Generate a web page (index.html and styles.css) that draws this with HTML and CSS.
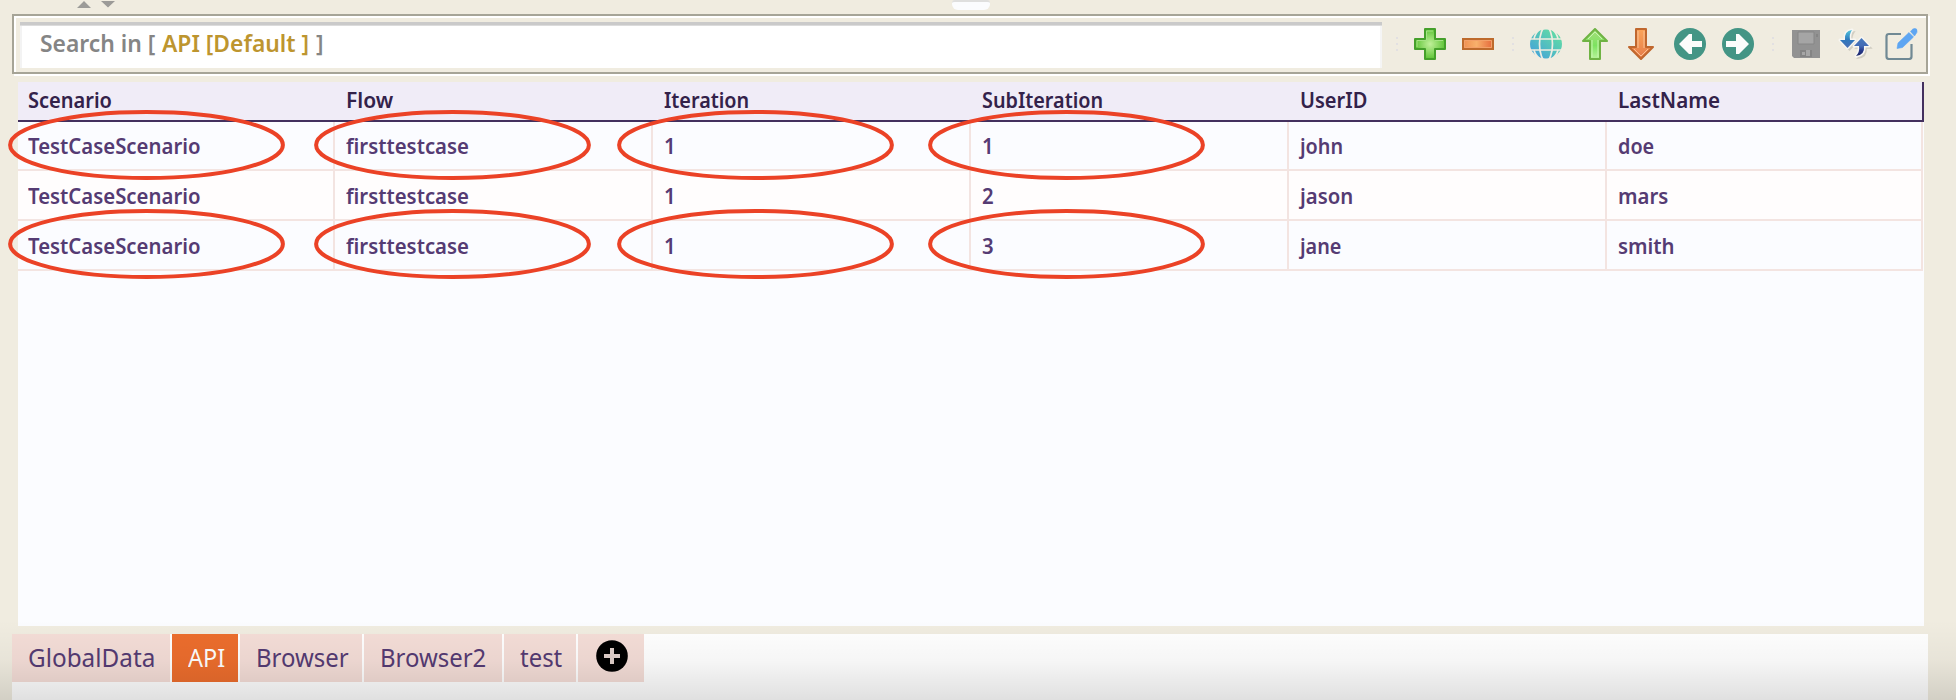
FILE: index.html
```html
<!DOCTYPE html>
<html lang="en">
<head>
<meta charset="utf-8">
<title>Test Data</title>
<link rel="stylesheet" href="styles.css">
</head>
<body>
<div class="app">
  <header class="splitter">
    <svg class="arrows" width="40" height="9" viewBox="0 0 40 9"><path d="M0 8L7 1L14 8zM24 1h14l-7 6.500z" fill="#9c9b98"/></svg>
    <span class="handle"></span>
  </header>
  <div class="toolbar">
    <div class="search"><span class="s1">Search in [</span><span class="s2">API [Default ]</span><span class="s3">]</span></div>
    <svg class="dots d1" width="2" height="14" viewBox="0 0 2 14"><path d="M0 0h2v2H0zM0 6h2v2H0zM0 12h2v2H0z" fill="#e2e0e2"/></svg>
    <svg class="ic plus" width="32" height="32" viewBox="0 0 32 32"><defs><radialGradient id="gp"><stop offset="0" stop-color="#c0f09a"/><stop offset="1" stop-color="#5fc437"/></radialGradient></defs><path d="M11 1h10v10h10v10H21v10H11V21H1V11h10z" fill="url(#gp)" stroke="#45a02b" stroke-width="2" stroke-linejoin="round"/><path d="M12.500 12.500V3H19M3 19v-6.500h9.500M21 12.500h8" fill="none" stroke="#a5e384" stroke-width="1"/></svg>
    <svg class="ic minus" width="32" height="12" viewBox="0 0 32 12"><defs><linearGradient id="gm"><stop offset="0" stop-color="#f08f50"/><stop offset=".45" stop-color="#f8b06c"/><stop offset="1" stop-color="#e5683a"/></linearGradient></defs><path d="M1 1h30v10H1z" fill="url(#gm)" stroke="#bd6a2c" stroke-width="2"/><path d="M2.500 2.500h27v7h-27z" fill="none" stroke="#f3a069" stroke-width="1"/></svg>
    <svg class="dots d2" width="2" height="14" viewBox="0 0 2 14"><path d="M0 0h2v2H0zM0 6h2v2H0zM0 12h2v2H0z" fill="#e2e0e2"/></svg>
    <svg class="ic globe" width="32" height="30" viewBox="0 0 32 30"><defs><linearGradient id="gg" x1="0" y1="1" x2="1" y2="0"><stop offset="0" stop-color="#419ce0"/><stop offset="1" stop-color="#66e59c"/></linearGradient></defs><ellipse cx="16" cy="15" rx="16" ry="14.500" fill="url(#gg)"/><g fill="none" stroke="#f0ece0" stroke-width="1.700"><path d="M0 10h32M0 21h32"/><ellipse cx="16" cy="15" rx="6.500" ry="17"/><path d="M4 10Q5 4 10 0M28 10Q27 4 22 0M4 21Q5 26 10 30M28 21Q27 26 22 30"/></g></svg>
    <svg class="ic up" width="26" height="32" viewBox="0 0 26 32"><defs><linearGradient id="gu" x2="0" y2="1"><stop offset="0" stop-color="#a8dd7c"/><stop offset=".55" stop-color="#7de360"/><stop offset="1" stop-color="#b9f39c"/></linearGradient></defs><path d="M13 1L25 13H18V31H8V13H1z" fill="url(#gu)" stroke="#6fb344" stroke-width="2" stroke-linejoin="round"/><path d="M10 12V29M16 12V29M6 11L13 4L20 11" fill="none" stroke="#c8f5b0" stroke-width="1"/></svg>
    <svg class="ic down" width="26" height="32" viewBox="0 0 26 32"><defs><linearGradient id="gd" x2="0" y2="1"><stop offset="0" stop-color="#fba45b"/><stop offset=".55" stop-color="#ef8f50"/><stop offset="1" stop-color="#e5794a"/></linearGradient></defs><path d="M13 31L25 19H18V1H8V19H1z" fill="url(#gd)" stroke="#c0672e" stroke-width="2" stroke-linejoin="round"/><path d="M10 3V20M16 3V20M6 21L13 28L20 21" fill="none" stroke="#f9c194" stroke-width="1"/></svg>
    <svg class="ic left" width="32" height="32" viewBox="0 0 32 32"><circle cx="16" cy="16" r="16" fill="#439585"/><path d="M5 16L15 6h3v7h10v6H18v7h-3z" fill="#fbfcfb"/></svg>
    <svg class="ic right" width="32" height="32" viewBox="0 0 32 32"><circle cx="16" cy="16" r="16" fill="#439585"/><path d="M27 16L17 6h-3v7H4v6h10v7h3z" fill="#fbfcfb"/></svg>
    <svg class="dots d3" width="2" height="14" viewBox="0 0 2 14"><path d="M0 0h2v2H0zM0 6h2v2H0zM0 12h2v2H0z" fill="#e2e0e2"/></svg>
    <svg class="ic save" width="28" height="28" viewBox="0 0 28 28"><path d="M0 0h28v28H2l-2-2z" fill="#929292"/><path d="M6 2h16v12H6z" fill="#a5a5a5" stroke="#868686"/><path d="M8 20h12v7H8z" fill="#848484"/><path d="M14 20h4v6h-4zM10 22h3v3h-3z" fill="#a6a6a6"/><path d="M24 4h2v3h-2z" fill="#858585"/></svg>
    <svg class="ic sync" width="32" height="32" viewBox="0 0 32 32"><g fill="#8f8b80" stroke="#8f8b80" stroke-width="1.500" opacity=".3" transform="translate(2 2)"><path d="M13 2Q5 3 6 12H1l7.500 8L16 12h-5Q10 6 13 2z"/><path d="M17 28Q26 27 25 18h5l-7.500-8L15 18h5Q21 24 17 28z"/></g><g fill="none" stroke="#f7f6f2" stroke-width="3" stroke-linejoin="round"><path d="M13 2Q5 3 6 12H1l7.500 8L16 12h-5Q10 6 13 2z"/><path d="M17 28Q26 27 25 18h5l-7.500-8L15 18h5Q21 24 17 28z"/></g><defs><linearGradient id="gs" x2="0" y2="1"><stop offset="0" stop-color="#50c4dc"/><stop offset=".55" stop-color="#2f78bd"/><stop offset="1" stop-color="#4a6fb5"/></linearGradient><linearGradient id="gt" x2="0" y2="1"><stop offset="0" stop-color="#4478bd"/><stop offset=".45" stop-color="#436bb5"/><stop offset=".7" stop-color="#25388a"/><stop offset="1" stop-color="#1c2767"/></linearGradient></defs><path d="M13 2Q5 3 6 12H1l7.500 8L16 12h-5Q10 6 13 2z" fill="url(#gs)"/><path d="M17 28Q26 27 25 18h5l-7.500-8L15 18h5Q21 24 17 28z" fill="url(#gt)"/></svg>
    <svg class="ic edit" width="33" height="32" viewBox="0 0 33 32"><path d="M16 6H4Q1.500 6 1.500 8.500V28.500Q1.500 31 4 31H24Q26.500 31 26.500 28.500V16" fill="none" stroke="#708994" stroke-width="2.200"/><path d="M12 20.500L13 15L24 4.500L28.500 9L17.500 19.500zM25.500 3.500Q28.500-1 31.500 1Q33.500 4 29.500 8z" fill="#5da5f2" stroke="#5da5f2" stroke-width=".6"/></svg>
  </div>
  <main class="panel">
    <div class="row head"><div><span class="h1">Scenario</span></div><div><span class="h2">Flow</span></div><div><span class="h3">Iteration</span></div><div><span class="h3">SubIteration</span></div><div><span class="h1">UserID</span></div><div><span class="h6">LastName</span></div></div>
    <div class="row r1"><div><span>TestCaseScenario</span></div><div><span>firsttestcase</span></div><div><span>1</span></div><div><span>1</span></div><div><span class="c5">john</span></div><div><span class="c5">doe</span></div></div>
    <div class="row r2"><div><span>TestCaseScenario</span></div><div><span>firsttestcase</span></div><div><span>1</span></div><div><span>2</span></div><div><span>jason</span></div><div><span>mars</span></div></div>
    <div class="row r3"><div><span>TestCaseScenario</span></div><div><span>firsttestcase</span></div><div><span>1</span></div><div><span>3</span></div><div><span class="c5">jane</span></div><div><span>smith</span></div></div>
  </main>
  <footer class="tabs">
    <div class="tab t1"><span>GlobalData</span></div><div class="tab t2 active"><span>API</span></div><div class="tab t3"><span>Browser</span></div><div class="tab t4"><span>Browser2</span></div><div class="tab t5"><span>test</span></div><div class="tab t6"><svg width="32" height="32" viewBox="0 0 32 32"><circle cx="16" cy="16" r="15.800" fill="#000"/><path d="M16 8v16M8 16h16" stroke="#e0cfca" stroke-width="4"/></svg></div>
  </footer>
  <svg class="marks" width="1956" height="700" viewBox="0 0 1956 700"><g fill="none" stroke="#eb4226" stroke-width="4"><ellipse cx="146.500" cy="145" rx="136.400" ry="33"/><ellipse cx="452.500" cy="145" rx="136.400" ry="33"/><ellipse cx="755.500" cy="145" rx="136.400" ry="33"/><ellipse cx="1066.500" cy="145" rx="136.400" ry="33"/><ellipse cx="146.500" cy="244" rx="136.400" ry="33"/><ellipse cx="452.500" cy="244" rx="136.400" ry="33"/><ellipse cx="755.500" cy="244" rx="136.400" ry="33"/><ellipse cx="1066.500" cy="244" rx="136.400" ry="33"/></g></svg>
  <div class="shade"></div>
</div>
</body>
</html>
```
FILE: styles.css
```css
* { box-sizing: border-box; }
body { margin: 0; background: #f0ece0; overflow: hidden; }
svg { display: block; flex: none; }
.app { position: relative; width: 1956px; height: 700px; display: flex; flex-direction: column; font-family: "Noto Sans", "Open Sans", sans-serif; }
.splitter { height: 14px; flex: none; display: flex; align-items: flex-start; padding-left: 77px; }
.handle { width: 38px; height: 10px; margin-left: 835px; background: #fbfcfe; border-top: 2px solid #dfdfde; border-radius: 3px 3px 6px 6px; }
.toolbar { flex: none; width: 1916px; height: 60px; margin-left: 12px; border: 2px solid #a6a497; box-shadow: 2px 2px 0 #fff, inset 2px 2px 0 #fff; display: flex; align-items: center; padding-left: 6px; }
.search { width: 1362px; height: 46px; margin-top: 2px; flex: none; background: #fff; border-top: 3px solid #cacaca; box-shadow: inset 0 1px 0 #dcdcdc, inset 2px 0 0 #f3f3f3, inset -2px 0 0 #f5f5f5; display: flex; padding-left: 20px; font-size: 24px; font-weight: 600; line-height: 32px; white-space: pre; color: #858585; padding-top: 2px; }
.search span { transform: scaleX(.952); transform-origin: 0 0; }
.s2 { color: #bd952f; margin-left: 1px; }
.s3 { margin-left: -1px; }
.d1 { margin-left: 14px; } .plus { margin-left: 16px; } .minus { margin-left: 16px; }
.d2 { margin-left: 18px; } .globe { margin-left: 16px; } .up { margin-left: 20px; } .down { margin-left: 20px; }
.left { margin-left: 20px; } .right { margin-left: 16px; } .d3 { margin-left: 18px; } .save { margin-left: 18px; }
.sync { margin-left: 19px; overflow: visible; } .edit { margin-left: 14px; }
.panel { flex: none; width: 1906px; height: 544px; margin: 8px 0 0 18px; background: #fbfcff; font-size: 22px; font-weight: 600; color: #553b73; }
.row { display: grid; grid-template-columns: 317px 318px 318px 318px 318px 316px; height: 50px; padding-right: 1px; line-height: 30px; white-space: nowrap; }
.row > div { border-right: 2px solid #f3e4e1; border-bottom: 2px solid #f3e4e1; padding: 9px 0 0 11px; }
.row > div:first-child { padding-left: 10px; }
.row span { display: inline-block; transform: scaleX(.925); transform-origin: 0 0; }
.row .c5 { transform: scaleX(.9); }
.row .h1 { transform: scaleX(.91); }
.row .h2 { transform: scaleX(.955); }
.row .h3 { transform: scaleX(.9); }
.row .h6 { transform: scaleX(.937); }
.r1 { height: 49px; } .r1 > div { padding-top: 8px; }
.r2 { background: #fffdfd; }
.head { height: 40px; background: #f0ecf7; border-bottom: 2px solid #43305e; border-right: 2px solid #43305e; padding: 0; color: #33224a; grid-template-columns: 317px 318px 318px 318px 318px 315px; }
.head > div { border: 0; padding-top: 2px; }
.tabs { flex: none; width: 1916px; height: 66px; margin: 8px 0 0 12px; background: #fff; display: flex; gap: 2px; align-items: flex-start; font-size: 25px; color: #553b73; }
.tab { height: 48px; background: #f4ddd7; padding: 6px 0 0 16px; line-height: 34px; white-space: nowrap; }
.tab span { display: inline-block; transform: scaleX(.957); transform-origin: 0 0; }
.t1 { width: 158px; } .t2 { width: 66px; } .t3 { width: 122px; } .t4 { width: 138px; } .t5 { width: 72px; } .t6 { width: 66px; padding-left: 18px; }
.t1 span { transform: scaleX(.972); } .t2 span { transform: scaleX(.94); }
.active { background: #ec6d2d; color: #fff; }
.marks { position: absolute; left: 0; top: 0; }
.shade { position: absolute; left: 0; right: 0; bottom: 0; height: 80px; background: linear-gradient(rgba(0,0,0,0), rgba(0,0,0,.035) 50%, rgba(0,0,0,.12)); }
```
